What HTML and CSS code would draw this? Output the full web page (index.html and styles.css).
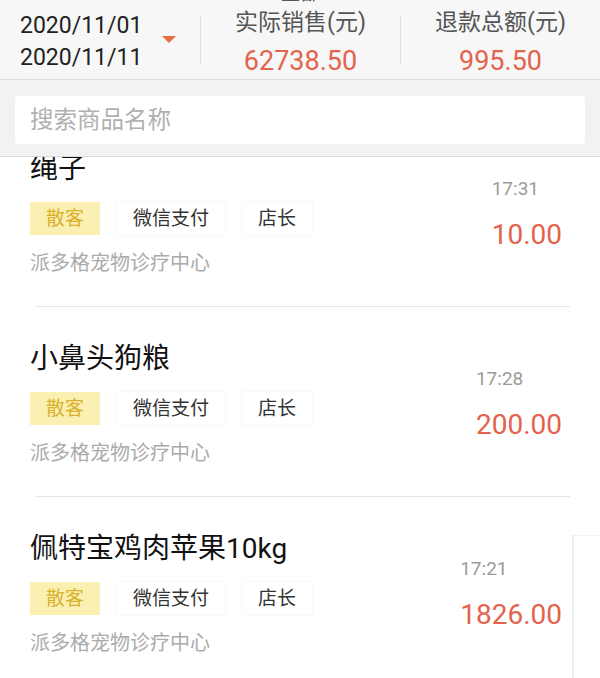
FILE: index.html
```html
<!DOCTYPE html>
<html lang="zh-CN">
<head>
    <meta charset="UTF-8">
    <meta name="viewport" content="width=device-width, initial-scale=1.0">
    <title>销售明细</title>
    <link rel="stylesheet" href="styles.css">
</head>
<body>
    <div class="page">
        <div class="summary">
            <div class="date-range">
                <div class="dates">
                    <div>2020/11/01</div>
                    <div>2020/11/11</div>
                </div>
                <span class="caret"></span>
            </div>
            <div class="divider"></div>
            <div class="stat">
                <div class="stat-label top">全部</div>
                <div class="stat-label">实际销售(元)</div>
                <div class="stat-value">62738.50</div>
            </div>
            <div class="divider"></div>
            <div class="stat">
                <div class="stat-label top hidden">全部</div>
                <div class="stat-label">退款总额(元)</div>
                <div class="stat-value">995.50</div>
            </div>
        </div>

        <div class="search-bar">
            <div class="search-box">搜索商品名称</div>
        </div>

        <div class="order-list">
            <div class="order-scroll">
                <div class="order">
                    <div class="order-main">
                        <div class="order-name">绳子</div>
                        <div class="tags">
                            <span class="tag tag-guest">散客</span>
                            <span class="tag">微信支付</span>
                            <span class="tag">店长</span>
                        </div>
                        <div class="order-shop">派多格宠物诊疗中心</div>
                    </div>
                    <div class="order-side">
                        <div class="order-time">17:31</div>
                        <div class="order-amount">10.00</div>
                    </div>
                </div>
                <div class="sep"></div>

                <div class="order">
                    <div class="order-main">
                        <div class="order-name">小鼻头狗粮</div>
                        <div class="tags">
                            <span class="tag tag-guest">散客</span>
                            <span class="tag">微信支付</span>
                            <span class="tag">店长</span>
                        </div>
                        <div class="order-shop">派多格宠物诊疗中心</div>
                    </div>
                    <div class="order-side">
                        <div class="order-time">17:28</div>
                        <div class="order-amount">200.00</div>
                    </div>
                </div>
                <div class="sep"></div>

                <div class="order">
                    <div class="order-main">
                        <div class="order-name">佩特宝鸡肉苹果10kg</div>
                        <div class="tags">
                            <span class="tag tag-guest">散客</span>
                            <span class="tag">微信支付</span>
                            <span class="tag">店长</span>
                        </div>
                        <div class="order-shop">派多格宠物诊疗中心</div>
                    </div>
                    <div class="order-side">
                        <div class="order-time">17:21</div>
                        <div class="order-amount">1826.00</div>
                    </div>
                </div>
                <div class="sep"></div>
            </div>
        </div>

        <div class="float-panel"></div>
    </div>
</body>
</html>
```

FILE: styles.css
```css
body {
    margin: 0;
    font-family: Roboto, "Noto Sans CJK SC", sans-serif;
    background-color: #ffffff;
    color: #222;
}

.page {
    position: relative;
    width: 600px;
    height: 678px;
    overflow: hidden;
    display: flex;
    flex-direction: column;
}

/* top summary */
.summary {
    height: 79px;
    flex-shrink: 0;
    display: flex;
    align-items: center;
    background-color: #f7f7f7;
    border-bottom: 1px solid #dcdcdc;
    overflow: hidden;
}

.date-range {
    width: 200px;
    height: 100%;
    box-sizing: border-box;
    padding: 4px 0 0 20px;
    display: flex;
    align-items: center;
}

.dates {
    font-size: 23px;
    line-height: 32px;
    color: #222;
}

.caret {
    margin: -4px 0 0 20px;
    width: 0;
    height: 0;
    border-left: 7px solid transparent;
    border-right: 7px solid transparent;
    border-top: 7px solid #e8703e;
}

.divider {
    width: 1px;
    height: 46px;
    background-color: #dedede;
}

.stat {
    flex: 1;
    height: 100%;
    display: flex;
    flex-direction: column;
    align-items: center;
}

.stat-label {
    font-size: 23px;
    line-height: 30px;
    color: #555;
}

.stat-label.top {
    font-size: 20px;
    line-height: 26px;
    margin-top: -20px;
    margin-bottom: 2px;
}

.stat-label.hidden {
    visibility: hidden;
}

.stat-value {
    margin-top: 7px;
    font-size: 27px;
    line-height: 32px;
    color: #e5624c;
}

/* search */
.search-bar {
    flex-shrink: 0;
    padding: 16px 15px 12px;
    background-color: #f2f2f2;
    border-bottom: 1px solid #dadada;
}

.search-box {
    height: 48px;
    line-height: 48px;
    padding-left: 15px;
    background-color: #ffffff;
    border-radius: 3px;
    font-size: 23.5px;
    color: #b0b0b0;
}

/* list */
.order-list {
    flex: 1;
    overflow: hidden;
}

.order-scroll {
    margin-top: -40px;
}

.order {
    height: 189px;
    box-sizing: border-box;
    padding: 35px 38px 0 30px;
    display: flex;
    justify-content: space-between;
}

.sep {
    height: 1px;
    margin: 0 30px 0 35px;
    background-color: #e6e6e6;
}

.order-name {
    font-size: 28px;
    line-height: 34px;
    color: #111;
}

.tags {
    margin-top: 16px;
    display: flex;
    gap: 17px;
}

.tag {
    height: 33px;
    line-height: 33px;
    padding: 0 16px;
    font-size: 19px;
    color: #333;
    background-color: #ffffff;
    box-shadow: 0 0 2px rgba(0, 0, 0, 0.08);
}

.tag-guest {
    background-color: #fcefb2;
    color: #d8b22c;
    box-shadow: none;
}

.order-shop {
    margin-top: 15px;
    font-size: 20px;
    line-height: 26px;
    color: #ababab;
}

.order-side {
    padding-top: 25px;
    display: flex;
    flex-direction: column;
    align-items: flex-start;
}

.order-time {
    font-size: 19px;
    line-height: 24px;
    color: #9a9a9a;
}

.order-amount {
    margin-top: 17px;
    font-size: 28px;
    line-height: 34px;
    color: #e5624c;
}

/* floating panel at right edge */
.float-panel {
    position: absolute;
    left: 572px;
    top: 535px;
    right: 0;
    bottom: 0;
    background-color: #ffffff;
    border-left: 2px solid #ececec;
    border-top: 1px solid #f3f3f3;
}
```
